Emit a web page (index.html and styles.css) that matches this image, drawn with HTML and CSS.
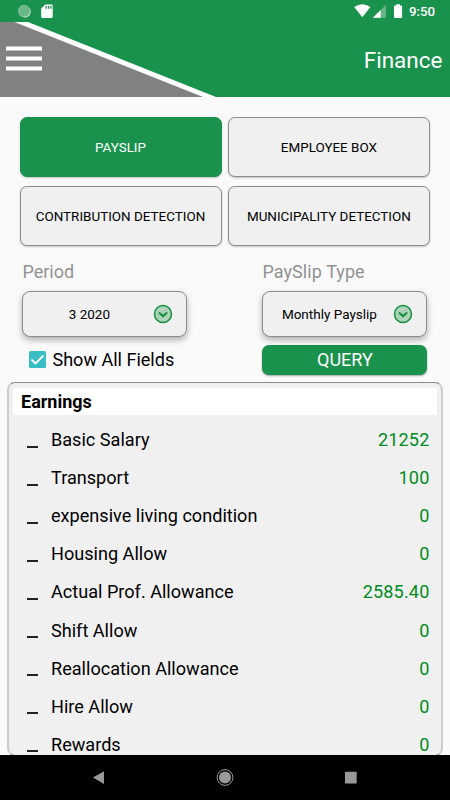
FILE: index.html
```html
<!DOCTYPE html>
<html lang="en">
<head>
<meta charset="utf-8">
<title>Finance</title>
<link rel="stylesheet" href="styles.css">
</head>
<body>
<div class="status">
  <svg class="status-left" width="60" height="22" viewBox="0 0 60 22">
    <circle cx="25" cy="11.8" r="5.6" fill="#fff"/>
    <circle cx="24.100" cy="11" r="6" fill="#69b68a"/>
    <circle cx="24.3" cy="11.2" r="5.8" fill="none" stroke="#a5d4b8" stroke-width="1" stroke-dasharray="1 1"/>
    <path d="M45.3 4.5H51.6Q52.7 4.5 52.7 5.6V16.8Q52.7 17.9 51.6 17.9H42.3Q41.2 17.9 41.2 16.8V8.6Z" fill="#fff"/>
    <path d="M46.2 6v2.7M48.6 6v2.7M51 6v2.7" stroke="#18924d" stroke-width="1.3"/>
  </svg>
  <svg class="status-right" width="56" height="22" viewBox="0 0 56 22">
    <path d="M.2 7Q8.3 1.600 16.400 7L8.300 17.300Z" fill="#fff"/>
    <path d="M18.800 17.800L31.900 4.700V17.800Z" fill="#69b68a"/>
    <path d="M18.800 17.800L26.700 9.900V17.800Z" fill="#fff"/>
    <path d="M42.200 4.200h3.700v1.300h1.300q.9 0 .9.9V17q0 .9-.9.9h-6.300q-.9 0-.9-.9V6.400q0-.9.9-.9h1.300Z" fill="#fff"/>
  </svg>
  <span class="clock">9:50</span>
</div>
<header class="header">
  <svg class="banner" width="220" height="75" viewBox="0 0 220 75">
    <path d="M0 0H28L216 75H0Z" fill="#fff"/>
    <path d="M0 0H14.500L203 75H0Z" fill="#808183"/>
    <path d="M6 26.400h36M6 36.400h36M6 46.400h36" stroke="#fff" stroke-width="4"/>
  </svg>
  <h1 class="title">Finance</h1>
</header>
<main class="main">
  <div class="tabs">
    <div class="tab active">PAYSLIP</div>
    <div class="tab">EMPLOYEE BOX</div>
    <div class="tab">CONTRIBUTION DETECTION</div>
    <div class="tab">MUNICIPALITY DETECTION</div>
  </div>
  <div class="filters">
    <div class="field">
      <div class="label">Period</div>
      <div class="select"><span class="value">3 2020</span>
        <svg width="20" height="20" viewBox="0 0 20 20"><circle cx="10" cy="10" r="8.500" fill="#add3ba" stroke="#128f39" stroke-width="1.500"/><path d="M5.800 8.600L10 12.100L14.200 8.600" fill="none" stroke="#128f39" stroke-width="2"/></svg>
      </div>
      <div class="check">
        <svg width="17" height="17" viewBox="0 0 17 17"><rect width="17" height="17" rx="1.500" fill="#38bfc3"/><path d="M2.500 8.500L6.500 12.500L14.500 4.500" fill="none" stroke="#fff" stroke-width="1.800"/></svg>
        <span>Show All Fields</span>
      </div>
    </div>
    <div class="field">
      <div class="label wide">PaySlip Type</div>
      <div class="select"><span class="value">Monthly Payslip</span>
        <svg width="20" height="20" viewBox="0 0 20 20"><circle cx="10" cy="10" r="8.500" fill="#add3ba" stroke="#128f39" stroke-width="1.500"/><path d="M5.800 8.600L10 12.100L14.200 8.600" fill="none" stroke="#128f39" stroke-width="2"/></svg>
      </div>
      <div class="query">QUERY</div>
    </div>
  </div>
  <section class="panel">
    <h2 class="section">Earnings</h2>
    <div class="row"><i class="dash"></i><span>Basic Salary</span><b>21252</b></div>
    <div class="row"><i class="dash"></i><span>Transport</span><b>100</b></div>
    <div class="row"><i class="dash"></i><span>expensive living condition</span><b>0</b></div>
    <div class="row"><i class="dash"></i><span>Housing Allow</span><b>0</b></div>
    <div class="row"><i class="dash"></i><span>Actual Prof. Allowance</span><b>2585.40</b></div>
    <div class="row"><i class="dash"></i><span>Shift Allow</span><b>0</b></div>
    <div class="row"><i class="dash"></i><span>Reallocation Allowance</span><b>0</b></div>
    <div class="row"><i class="dash"></i><span>Hire Allow</span><b>0</b></div>
    <div class="row"><i class="dash"></i><span>Rewards</span><b>0</b></div>
  </section>
</main>
<nav class="nav">
  <svg width="450" height="45" viewBox="0 0 450 45">
    <path d="M93 22.500L104 16.200V29Z" fill="#999"/>
    <circle cx="225" cy="22.500" r="7.900" fill="none" stroke="#999" stroke-width="1"/>
    <circle cx="225" cy="22.500" r="6" fill="#999"/>
    <rect x="345" y="16.700" width="11.700" height="11.700" rx=".6" fill="#999"/>
  </svg>
</nav>
</body>
</html>
```
FILE: styles.css
```css
* { box-sizing: border-box; }
body {
  margin: 0;
  width: 450px;
  height: 800px;
  overflow: hidden;
  display: flex;
  flex-direction: column;
  background: #fafafa;
  color: #000;
  font-family: Roboto, "Liberation Sans", sans-serif;
}
svg { display: block; flex: none; }
.status {
  height: 22px;
  flex: none;
  display: flex;
  align-items: center;
  background: #18924d;
}
.status-right { margin-left: auto; }
.clock {
  width: 26px;
  margin: 1px 15px 0 -1px;
  color: #fff;
  font-size: 13.300px;
  font-weight: 500;
  line-height: 20px;
  white-space: nowrap;
}
.header {
  height: 75px;
  flex: none;
  display: flex;
  justify-content: space-between;
  align-items: center;
  padding-right: 7.500px;
  background: #18924d;
}
.title {
  margin: 0;
  color: #fff;
  font-size: 22.500px;
  font-weight: 400;
  line-height: 28px;
}
.main {
  flex: 1;
  min-height: 0;
  display: flex;
  flex-direction: column;
  padding: 20px 7px 0;
}
.tabs {
  display: grid;
  grid-template-columns: 202px 202px;
  grid-auto-rows: 60px;
  gap: 9.400px 6.400px;
  margin-left: 12.500px;
}
.tab {
  display: flex;
  align-items: center;
  justify-content: center;
  border: 1px solid #8c8c8c;
  border-radius: 7px;
  background: #f0f0f0;
  box-shadow: 0 1px 2px rgba(0, 0, 0, .22);
  font-size: 13.450px;
  white-space: nowrap;
}
.tab.active {
  border-color: #18924d;
  background: #18924d;
  color: #fff;
}
.filters {
  display: grid;
  grid-template-columns: 165px 165px;
  column-gap: 75px;
  margin: 14.600px 0 0 15.400px;
}
.label {
  height: 30px;
  color: #929292;
  font-size: 18px;
  line-height: 22px;
}
.label.wide { letter-spacing: .08px; }
.select {
  display: flex;
  align-items: center;
  height: 46px;
  padding-right: 13px;
  border: 1px solid #8c8c8c;
  border-radius: 8px;
  background: #f0f0f0;
  box-shadow: 0 3px 6px rgba(0, 0, 0, .3);
  font-size: 13.500px;
}
.value { flex: 1; padding-left: 2px; text-align: center; }
.check {
  display: flex;
  align-items: center;
  gap: 6.500px;
  height: 30px;
  margin: 8px 0 0 6.600px;
  font-size: 18.050px;
  white-space: nowrap;
}
.query {
  height: 30px;
  margin-top: 8px;
  border-radius: 7px;
  background: #18924d;
  color: #fff;
  box-shadow: 0 1px 2px rgba(0, 0, 0, .35);
  font-size: 18px;
  line-height: 30px;
  text-align: center;
}
.panel {
  flex: 1;
  min-height: 0;
  margin: 7px 0 -1px;
  padding: 5px 4px 0;
  overflow: hidden;
  border: 1px solid #8c8c8c;
  border-right: 2px solid #ccc;
  border-left: 2px solid #ccc;
  border-radius: 8px;
  background: #f0f0f0;
}
.section {
  height: 27px;
  margin: 0 0 5.500px;
  padding-left: 8px;
  background: #fff;
  font-size: 18px;
  font-weight: 700;
  line-height: 27px;
}
.row {
  display: flex;
  align-items: center;
  height: 38.100px;
  padding: 0 7.500px 0 14px;
  font-size: 18.100px;
}
.dash {
  width: 11px;
  height: 2px;
  margin: 14px 13px 0 0;
  background: #222;
}
.row b {
  margin-left: auto;
  color: #008c1e;
  font-weight: 400;
  letter-spacing: .15px;
}
.nav { height: 45px; flex: none; background: #000; }
```
